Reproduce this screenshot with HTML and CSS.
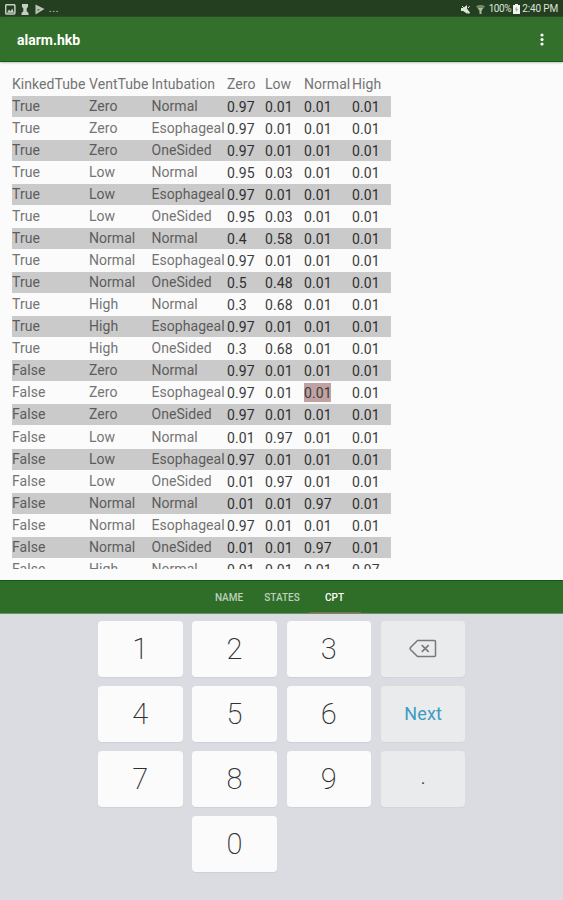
FILE: index.html
```html
<!DOCTYPE html>
<html lang="en">
<head>
<meta charset="utf-8">
<title>alarm.hkb</title>
<link rel="stylesheet" href="styles.css">
</head>
<body>
<div class="status">
  <div class="status-left">
    <svg width="11" height="11" viewBox="0 0 11 11"><rect x=".7" y=".7" width="9.2" height="9.2" rx="1" fill="none" stroke="#c5cec2" stroke-width="1.5"/><path d="M2 8.7 4 5.5l1.4 1.7L7.3 4.5 9 8.7z" fill="#c5cec2"/></svg>
    <svg class="pawn" width="8" height="11" viewBox="0 0 8 11"><path d="M1 0h6v3L5.700 4.200v3L7.500 9v2h-7V9l1.800-1.800v-3L1 3z" fill="#c5cec2"/></svg>
    <svg class="play" width="10" height="11" viewBox="0 0 10 11"><path d="M.5.5 9.5 5 .5 10.5z" fill="#b9c5b5"/><path d="M2 5 5 5.300 3 7.500z" fill="#5f7959"/></svg>
    <span class="dots">...</span>
  </div>
  <div class="status-right">
    <svg width="9" height="9" viewBox="0 0 9 9"><path d="M0 3h2.2L6 0v3.8L9 7.5 8 9 6.4 7.4V9L2.2 6H0z" fill="#dce3da"/><path d="m1 1 7 7M8.6 1.2 7 3" stroke="#dce3da"/></svg>
    <svg class="wifi" width="9" height="9" viewBox="0 0 9 9"><path d="M0 1.2C2.5-.4 6.500-.4 9 1.200L4.500 7z" fill="#6f8b69"/><path d="M2 3h5L5.500 5.500V9h-2V5.500z" fill="#a9baa5"/></svg>
    <span class="percent">100%</span>
    <svg class="battery" width="7" height="10" viewBox="0 0 7 10"><path d="M2 0h3v1h2v9H0V1h2z" fill="#f0f3ef"/><path d="M4 2.500 2 5.500h1.300L3 8l2-3H3.700z" fill="#8ba086"/></svg>
    <span class="time">2:40 PM</span>
  </div>
</div>
<header class="appbar">
  <h1>alarm.hkb</h1>
  <svg width="4" height="13" viewBox="0 0 4 13"><g fill="#fff"><circle cx="2" cy="2" r="1.600"/><circle cx="2" cy="6.500" r="1.600"/><circle cx="2" cy="11" r="1.600"/></g></svg>
</header>
<main class="sheet">
  <div class="cpt">
    <div class="row head"><span>KinkedTube</span><span>VentTube</span><span>Intubation</span><span>Zero</span><span>Low</span><span>Normal</span><span>High</span></div>
    <div class="row"><span>True</span><span>Zero</span><span>Normal</span><b>0.97</b><b>0.01</b><b>0.01</b><b>0.01</b></div>
    <div class="row"><span>True</span><span>Zero</span><span>Esophageal</span><b>0.97</b><b>0.01</b><b>0.01</b><b>0.01</b></div>
    <div class="row"><span>True</span><span>Zero</span><span>OneSided</span><b>0.97</b><b>0.01</b><b>0.01</b><b>0.01</b></div>
    <div class="row"><span>True</span><span>Low</span><span>Normal</span><b>0.95</b><b>0.03</b><b>0.01</b><b>0.01</b></div>
    <div class="row"><span>True</span><span>Low</span><span>Esophageal</span><b>0.97</b><b>0.01</b><b>0.01</b><b>0.01</b></div>
    <div class="row"><span>True</span><span>Low</span><span>OneSided</span><b>0.95</b><b>0.03</b><b>0.01</b><b>0.01</b></div>
    <div class="row"><span>True</span><span>Normal</span><span>Normal</span><b>0.4</b><b>0.58</b><b>0.01</b><b>0.01</b></div>
    <div class="row"><span>True</span><span>Normal</span><span>Esophageal</span><b>0.97</b><b>0.01</b><b>0.01</b><b>0.01</b></div>
    <div class="row"><span>True</span><span>Normal</span><span>OneSided</span><b>0.5</b><b>0.48</b><b>0.01</b><b>0.01</b></div>
    <div class="row"><span>True</span><span>High</span><span>Normal</span><b>0.3</b><b>0.68</b><b>0.01</b><b>0.01</b></div>
    <div class="row"><span>True</span><span>High</span><span>Esophageal</span><b>0.97</b><b>0.01</b><b>0.01</b><b>0.01</b></div>
    <div class="row"><span>True</span><span>High</span><span>OneSided</span><b>0.3</b><b>0.68</b><b>0.01</b><b>0.01</b></div>
    <div class="row"><span>False</span><span>Zero</span><span>Normal</span><b>0.97</b><b>0.01</b><b>0.01</b><b>0.01</b></div>
    <div class="row"><span>False</span><span>Zero</span><span>Esophageal</span><b>0.97</b><b>0.01</b><b class="selected">0.01</b><b>0.01</b></div>
    <div class="row"><span>False</span><span>Zero</span><span>OneSided</span><b>0.97</b><b>0.01</b><b>0.01</b><b>0.01</b></div>
    <div class="row"><span>False</span><span>Low</span><span>Normal</span><b>0.01</b><b>0.97</b><b>0.01</b><b>0.01</b></div>
    <div class="row"><span>False</span><span>Low</span><span>Esophageal</span><b>0.97</b><b>0.01</b><b>0.01</b><b>0.01</b></div>
    <div class="row"><span>False</span><span>Low</span><span>OneSided</span><b>0.01</b><b>0.97</b><b>0.01</b><b>0.01</b></div>
    <div class="row"><span>False</span><span>Normal</span><span>Normal</span><b>0.01</b><b>0.01</b><b>0.97</b><b>0.01</b></div>
    <div class="row"><span>False</span><span>Normal</span><span>Esophageal</span><b>0.97</b><b>0.01</b><b>0.01</b><b>0.01</b></div>
    <div class="row"><span>False</span><span>Normal</span><span>OneSided</span><b>0.01</b><b>0.01</b><b>0.97</b><b>0.01</b></div>
    <div class="row"><span>False</span><span>High</span><span>Normal</span><b>0.01</b><b>0.01</b><b>0.01</b><b>0.97</b></div>
  </div>
</main>
<nav class="tabs"><span>NAME</span><span>STATES</span><span class="active">CPT</span></nav>
<div class="keyboard">
  <div class="keys">
    <div class="key">1</div><div class="key">2</div><div class="key">3</div>
    <div class="key alt"><svg width="28" height="19" viewBox="0 0 28 19"><path d="M8.500 1.500H25.500q1 0 1 1v14q0 1-1 1H8.500L1.500 10.500q-.8-1 0-2z" fill="none" stroke="#777a7d" stroke-width="1.500"/><path d="m12.700 6.200 7 6.600m0-6.600-7 6.600" stroke="#777a7d" stroke-width="1.700"/></svg></div>
    <div class="key">4</div><div class="key">5</div><div class="key">6</div><div class="key alt next">Next</div>
    <div class="key">7</div><div class="key">8</div><div class="key">9</div><div class="key alt point">.</div>
    <div class="key zero">0</div>
  </div>
</div>
</body>
</html>
```

FILE: styles.css
```css
* { box-sizing: border-box; }
body {
  margin: 0;
  width: 563px;
  height: 900px;
  overflow: hidden;
  display: flex;
  flex-direction: column;
  background: #fbfbfb;
  font-family: Roboto, "Liberation Sans", sans-serif;
}
.status {
  height: 17px;
  flex: none;
  background: #243f20;
  color: #dce3da;
  display: flex;
  justify-content: space-between;
  padding: 0 5px;
  font-size: 10px;
  line-height: 18px;
}
.status-left, .status-right { display: flex; align-items: center; }
.status-right { padding-top: 1px; }
.status-left { padding-top: 1px; }
.pawn { margin-left: 5px; }
.play { margin-left: 6px; }
.dots { margin-left: 4px; letter-spacing: .8px; }
.wifi { margin-left: 6px; }
.percent { margin-left: 4px; letter-spacing: -.4px; }
.battery { margin-left: 2px; }
.time { margin-left: 2px; letter-spacing: -.15px; }
.appbar {
  height: 45px;
  flex: none;
  background: #33702c;
  border-bottom: 1px solid #0f5c0e;
  box-shadow: 0 1px 2px #bcc5bb;
  display: flex;
  align-items: center;
  justify-content: space-between;
  padding: 1px 19px 0 17px;
}
.appbar h1 { margin: 0; font-size: 14px; font-weight: 700; color: #fff; }
.sheet { height: 518px; flex: none; padding: 12px 12px 0; }
.cpt { width: 379px; height: 494.5px; overflow: hidden; }
.row {
  display: grid;
  grid-template-columns: 77px 62.5px 75.500px 38px 39px 48px 39px;
  height: 21px;
  margin-bottom: 1.04px;
  font-size: 14px;
  line-height: 20px;
  letter-spacing: .05px;
  color: #747474;
  white-space: nowrap;
}
.row:nth-child(even) { background: #cacaca; color: #5c5c5c; }
.row b { font-weight: 400; color: #3c3c3c; letter-spacing: .1px; line-height: 22px; }
.row:nth-child(even) b { color: #2e2e2e; }
.row .selected { width: 27px; height: 19px; background: #c1a2a2; line-height: 20px; margin-top: 1px; }
.tabs {
  height: 34px;
  flex: none;
  background: #2f6e29;
  border-top: 1px solid #0f5c0e;
  border-bottom: 1px solid #6c9169;
  display: grid;
  grid-template-columns: 53px 53px 52px;
  justify-content: center;
  font-size: 10px;
  font-weight: 500;
  line-height: 34px;
  text-align: center;
  color: #bdd0ba;
}
.tabs .active { color: #fff; height: 32px; box-shadow: inset 0 -1px #8d654c; }
.keyboard { flex: 1; background: #dadce1; padding: 7px 0 0 98px; }
.keys {
  display: grid;
  grid-template-columns: repeat(4, 84.500px);
  grid-auto-rows: 55.500px;
  gap: 9.600px 9.800px;
}
.key {
  border-radius: 4px;
  background: #fbfbfc;
  box-shadow: 0 1px 1px #cdd0d4;
  display: flex;
  align-items: center;
  justify-content: center;
  font-size: 29px;
  font-weight: 200;
  color: #303030;
}
.key.alt { background: #eaebed; box-shadow: 0 1px 1px #d2d4d8; }
.key.next { font-size: 18px; font-weight: 400; color: #3c9cc2; letter-spacing: .2px; }
.key.point { font-size: 16px; font-weight: 400; }
.key.zero { grid-column: 2; }
```
